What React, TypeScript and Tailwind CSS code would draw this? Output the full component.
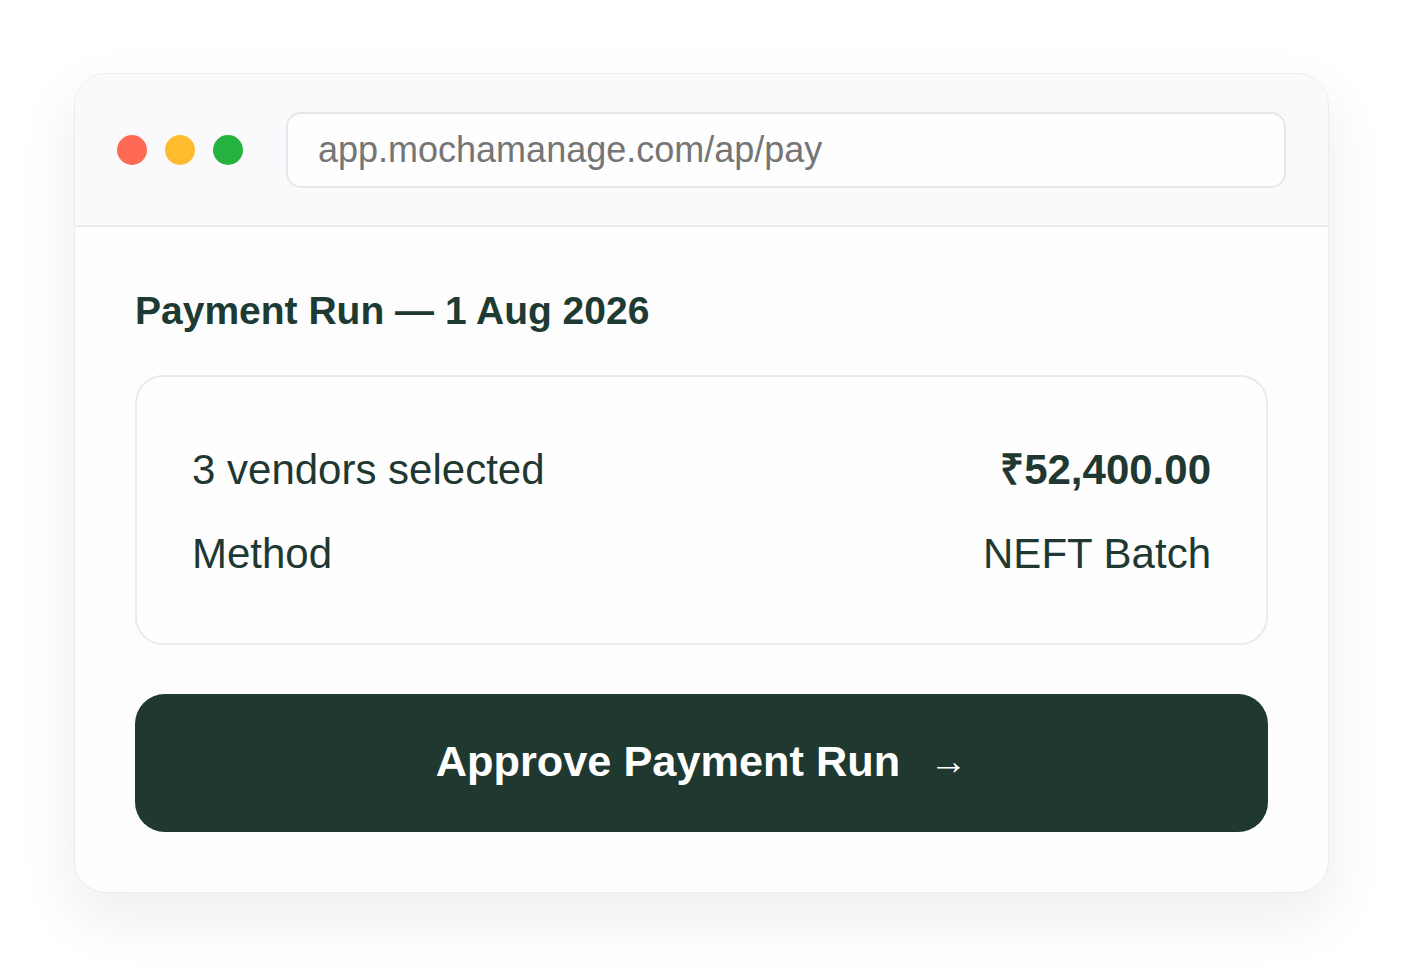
export default function App() {
  return (
    <div
      className="min-h-[966px] w-full bg-white pl-[74px] pt-[73px]"
      style={{ fontFamily: '"Liberation Sans", Arial, sans-serif' }}
    >
      <div className="w-[1255px] overflow-hidden rounded-[32px] border border-[#ecebee] bg-[#fdfdfd] shadow-[0_24px_60px_rgba(20,20,30,0.08)]">
        {/* browser chrome */}
        <div className="flex h-[153px] items-center border-b-2 border-[#ecebee] bg-[#faf9fb] pl-[42px] pr-[42px]">
          <div className="flex items-center gap-[18px]">
            <span className="h-[30px] w-[30px] rounded-full bg-[#ff6a57]" />
            <span className="h-[30px] w-[30px] rounded-full bg-[#fdbb2d]" />
            <span className="h-[30px] w-[30px] rounded-full bg-[#25b23f]" />
          </div>
          <div className="ml-[43px] flex h-[76px] flex-1 items-center rounded-[15px] border-2 border-[#e8e6ea] bg-[#fefefe] pl-[30px] text-[36px] text-[#757575]">
            app.mochamanage.com/ap/pay
          </div>
        </div>

        {/* content */}
        <div className="px-[60px] pb-[60px] pt-[61px]">
          <h1 className="text-[39px] font-bold leading-[1.2] text-[#1d3a33]">
            Payment Run — 1 Aug 2026
          </h1>

          <div className="mt-[40px] flex flex-col gap-[21px] rounded-[28px] border-2 border-[#ebe9ed] bg-[#fefefe] px-[55px] pb-[58px] pt-[61px] text-[42px] leading-[1.5] text-[#1f3832]">
            <div className="flex items-center justify-between">
              <span>3 vendors selected</span>
              <span className="font-bold">₹52,400.00</span>
            </div>
            <div className="flex items-center justify-between">
              <span>Method</span>
              <span>NEFT Batch</span>
            </div>
          </div>

          <button className="mt-[49px] flex h-[138px] w-full items-center justify-center gap-[29px] rounded-[30px] bg-[#1f3830] pb-[3px] text-white">
            <span className="text-[43.3px] font-bold">Approve Payment Run</span>
            <span className="text-[38px]">→</span>
          </button>
        </div>
      </div>
    </div>
  );
}
